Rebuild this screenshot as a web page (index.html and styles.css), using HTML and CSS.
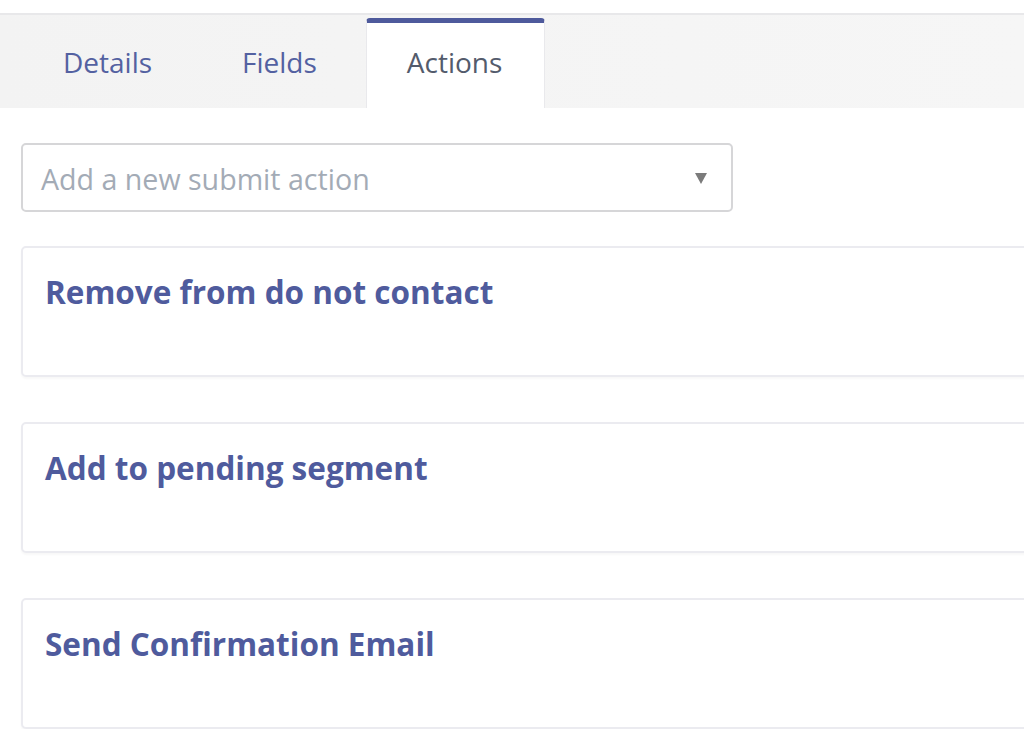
FILE: index.html
```html
<!DOCTYPE html>
<html>
<head>
<meta charset="utf-8">
<link rel="stylesheet" href="styles.css">
</head>
<body>
<div class="topstrip"></div>
<div class="tabbar">
  <div class="tab">Details</div>
  <div class="tab">Fields</div>
  <div class="tab active">Actions</div>
</div>
<main class="content">
  <div class="select">
    <span class="placeholder">Add a new submit action</span>
    <span class="arrow"></span>
  </div>
  <section class="card"><h3 class="card-title">Remove from do not contact</h3></section>
  <section class="card"><h3 class="card-title">Add to pending segment</h3></section>
  <section class="card"><h3 class="card-title">Send Confirmation Email</h3></section>
</main>
</body>
</html>
```

FILE: styles.css
```css
html, body {
  margin: 0;
  padding: 0;
  background: #ffffff;
  overflow: hidden;
  font-family: "Open Sans", "DejaVu Sans", sans-serif;
}

.topstrip {
  height: 13px;
  background: #ffffff;
  border-bottom: 2px solid #e8e8ea;
}

.tabbar {
  display: flex;
  gap: 10px;
  height: 93px;
  padding-left: 23px;
  background: linear-gradient(to right, #f3f3f3, #f6f6f6);
  box-sizing: border-box;
}

.tab {
  margin-top: 3px;
  padding: 0 40px 8px 40px;
  height: 90px;
  display: flex;
  align-items: center;
  font-size: 28px;
  color: #5361a1;
  box-sizing: border-box;
  border-top: 5px solid transparent;
}

.tab.active {
  background: #ffffff;
  color: #535b6c;
  border-top: 5px solid #4e5a9c;
  border-left: 1px solid #e9e9ec;
  border-right: 1px solid #e9e9ec;
  border-radius: 4px 4px 0 0;
  padding: 0 42px 8px 40px;
  margin-left: -1px;
}

.content {
  padding: 35px 0 0 21px;
}

.select {
  width: 712px;
  height: 69px;
  box-sizing: border-box;
  border: 2px solid #d6d6d8;
  border-radius: 5px;
  display: flex;
  align-items: center;
  justify-content: space-between;
  padding: 0 24px 0 18px;
  background: #fff;
}

.placeholder {
  font-size: 28.6px;
  color: #a3abb6;
  margin-top: 1px;
}

.arrow {
  width: 0;
  height: 0;
  border-left: 6px solid transparent;
  border-right: 6px solid transparent;
  border-top: 11px solid #7b7b7b;
  margin-top: 2px;
}

.card {
  margin-top: 34px;
  margin-right: -6px;
  height: 131px;
  box-sizing: border-box;
  border: 2px solid #ebebf0;
  border-radius: 5px;
  background: #fff;
  box-shadow: 0 2px 2px rgba(0, 0, 0, 0.03);
  padding: 27px 22px;
}

.card + .card {
  margin-top: 45px;
}

.card-title {
  margin: 0;
  font-size: 31.5px;
  line-height: 1.1;
  font-weight: 700;
  color: #4f5b9d;
}
```
